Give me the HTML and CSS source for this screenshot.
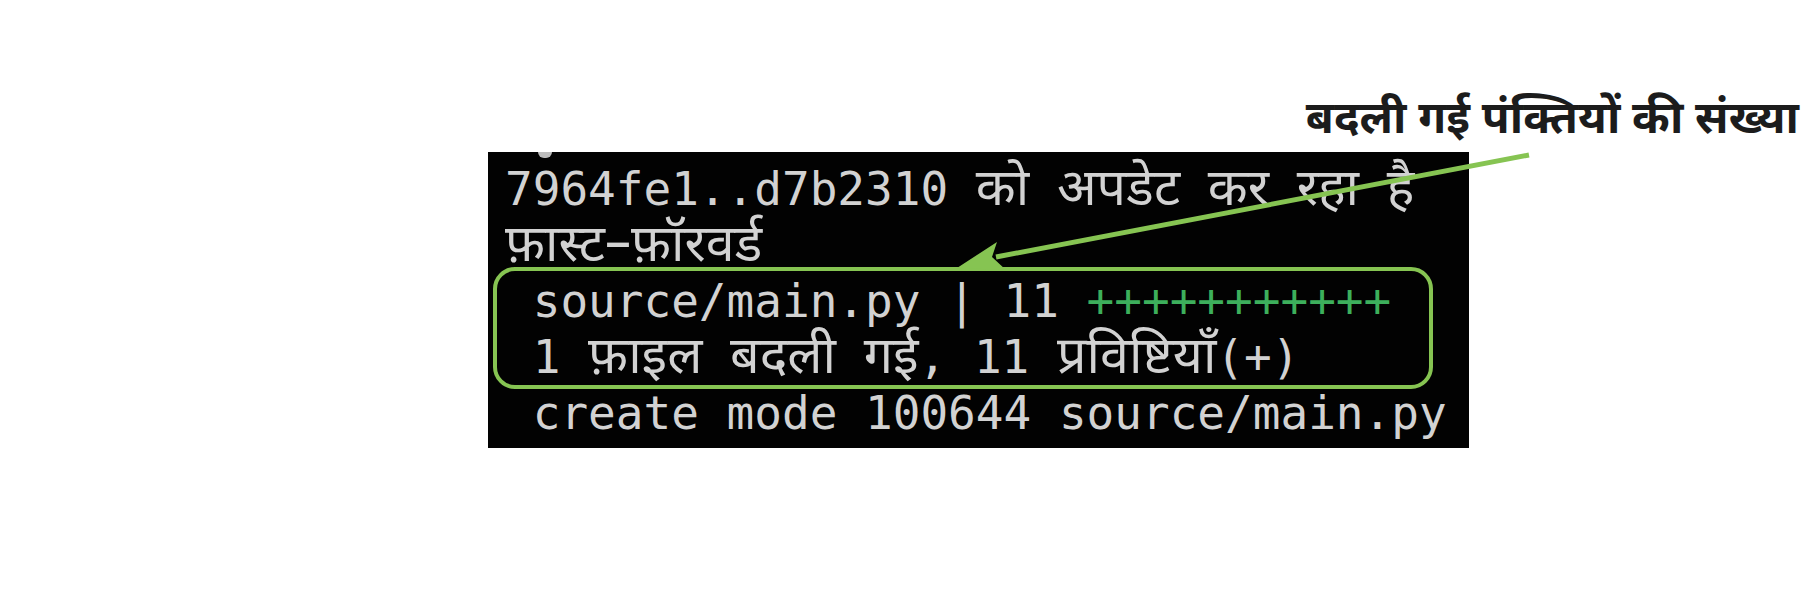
FILE: index.html
```html
<!DOCTYPE html>
<html lang="hi">
<head>
<meta charset="utf-8">
<title>Git pull output</title>
<link rel="stylesheet" href="styles.css">
</head>
<body>
<div class="page">
  <div class="label">बदली गई पंक्तियों की संख्या</div>
  <div class="terminal">
    <div class="line ghost"><span class="blob"></span></div>
    <div class="line">7964fe1..d7b2310 <span class="dv">को</span> <span class="dv">अपडेट</span> <span class="dv">कर</span> <span class="dv">रहा</span> <span class="dv">है</span></div>
    <div class="line"><span class="dv">फ़ास्ट–फ़ॉरवर्ड</span></div>
    <div class="highlight">
      <div class="line"> source/main.py | 11 <span class="plus">+++++++++++</span></div>
      <div class="line"> 1 <span class="dv">फ़ाइल</span> <span class="dv">बदली</span> <span class="dv">गई</span>, 11 <span class="dv">प्रविष्टियाँ</span>(+)</div>
    </div>
    <div class="line"> create mode 100644 source/main.py</div>
  </div>
  <svg class="arrow" width="1815" height="592" viewBox="0 0 1815 592" aria-hidden="true">
    <line x1="1529" y1="155" x2="996" y2="257" stroke="#86c452" stroke-width="5" stroke-linecap="butt"/>
    <polygon points="957,268 997,242 992,257 1006,270" fill="#86c452"/>
  </svg>
</div>
</body>
</html>
```
FILE: styles.css
```css
html, body {
  margin: 0;
  padding: 0;
  background: #ffffff;
}
.page {
  position: relative;
  width: 1815px;
  height: 592px;
  overflow: hidden;
}
.label {
  padding-top: 96px;
  padding-right: 16px;
  height: 52px;
  text-align: right;
  font-family: "Noto Sans Devanagari", "Noto Sans", "Lohit Devanagari", sans-serif;
  font-weight: 700;
  font-size: 45.5px;
  line-height: 52px;
  color: #1c1c1c;
}
.terminal {
  margin-top: 4px;
  margin-left: 488px;
  width: 981px;
  height: 296px;
  box-sizing: border-box;
  padding: 9px 0 0 17px;
  background: #020202;
  overflow: hidden;
  font-family: "DejaVu Sans Mono", "Noto Sans Devanagari", "Lohit Devanagari", monospace;
  font-size: 46px;
  color: #d2d2d2;
}
.line {
  height: 56px;
  line-height: 56px;
  white-space: pre;
}
.ghost {
  margin-top: -56px;
  position: relative;
}
.blob {
  position: absolute;
  left: 33px;
  top: 47px;
  width: 14px;
  height: 6px;
  border-radius: 0 0 7px 7px;
  background: #bdbdbd;
}
.dv {
  font-family: "Noto Sans Devanagari", "Lohit Devanagari", sans-serif;
  font-size: 1.13em;
}
.highlight {
  width: 940px;
  box-sizing: border-box;
  margin: -6px 0 -4px -12px;
  padding: 2px 0 0 8px;
  border: 4px solid #86c452;
  border-radius: 22px;
}
.plus {
  color: #3daf5c;
}
.arrow {
  position: absolute;
  left: 0;
  top: 0;
  pointer-events: none;
}
```
